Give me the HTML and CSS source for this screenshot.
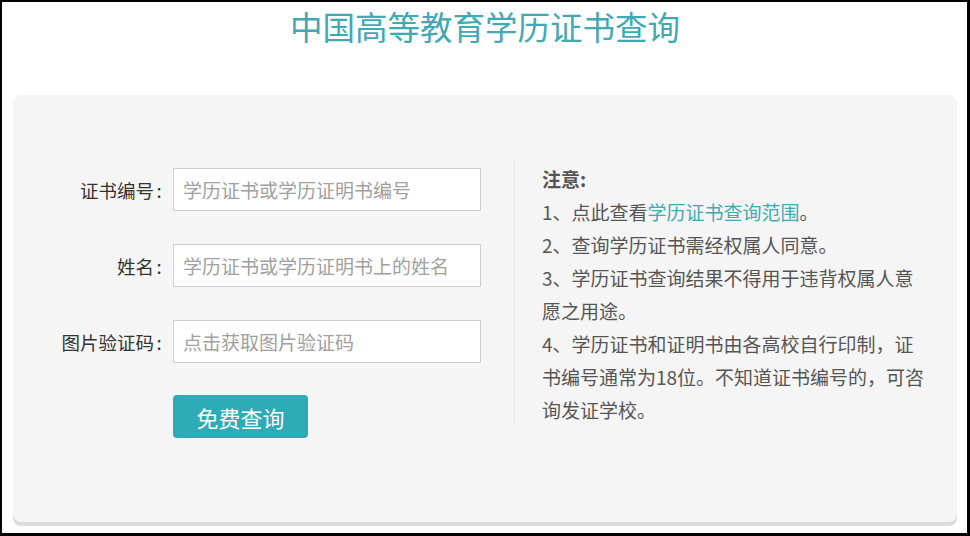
FILE: index.html
```html
<!DOCTYPE html>
<html lang="zh-CN">
<head>
<meta charset="utf-8">
<title>中国高等教育学历证书查询</title>
<link rel="stylesheet" href="styles.css">
</head>
<body>
<div class="page">
  <h1 class="title">中国高等教育学历证书查询</h1>
  <div class="card">
    <form class="form">
      <div class="row">
        <label class="label">证书编号<span class="colon">:</span></label>
        <input class="field" type="text" placeholder="学历证书或学历证明书编号">
      </div>
      <div class="row">
        <label class="label">姓名<span class="colon">:</span></label>
        <input class="field" type="text" placeholder="学历证书或学历证明书上的姓名">
      </div>
      <div class="row">
        <label class="label">图片验证码<span class="colon">:</span></label>
        <input class="field" type="text" placeholder="点击获取图片验证码">
      </div>
      <button class="btn" type="button">免费查询</button>
    </form>
    <div class="notes">
      <p class="notes-title">注意:</p>
      <p>1、点此查看<a class="link" href="#">学历证书查询范围</a>。</p>
      <p>2、查询学历证书需经权属人同意。</p>
      <p>3、学历证书查询结果不得用于违背权属人意愿之用途。</p>
      <p>4、学历证书和证明书由各高校自行印制，证书编号通常为18位。不知道证书编号的，可咨询发证学校。</p>
    </div>
  </div>
</div>
</body>
</html>
```
FILE: styles.css
```css
html, body {
  margin: 0;
  padding: 0;
  background: #000;
}
body {
  font-family: "Noto Sans CJK SC", "Noto Sans", sans-serif;
  width: 970px;
  height: 536px;
  overflow: hidden;
}
.page {
  background: #fff;
  margin: 2px 3px 0 2px;
  height: 531px;
  padding: 0 10px 0 11px;
  box-sizing: border-box;
  overflow: hidden;
}
.title {
  margin: 0;
  padding-top: 8px;
  height: 93px;
  box-sizing: border-box;
  font-size: 32.5px;
  line-height: 32px;
  font-weight: normal;
  color: #3fa9b4;
  text-align: center;
}
.card {
  background: #f5f5f5;
  border-radius: 8px;
  box-shadow: 0 4px 0 #dcdcdc;
  height: 427px;
  box-sizing: border-box;
  padding-top: 65px;
  display: flex;
  align-items: flex-start;
}
.form {
  width: 468px;
  padding: 8px 33px 0 0;
  margin: 0;
  display: flex;
  flex-direction: column;
}
.row {
  display: flex;
  align-items: center;
  height: 43px;
  margin-bottom: 33px;
}
.label {
  width: 151px;
  margin-right: 9px;
  text-align: right;
  font-size: 18.5px;
  color: #333;
}
.colon {
  display: inline-block;
  width: 10px;
  text-align: center;
}
.field {
  width: 308px;
  height: 43px;
  box-sizing: border-box;
  border: 1px solid #cfcfcf;
  background: #fff;
  padding: 0 9px;
  font-family: "Noto Sans CJK SC", "Noto Sans", sans-serif;
  font-size: 19px;
  color: #333;
  outline: none;
}
.field::placeholder {
  color: #a0a0a0;
}
.btn {
  margin: -1px 0 0 160px;
  width: 135px;
  height: 43px;
  border: none;
  border-radius: 4px;
  background: #2eabb7;
  color: #fff;
  font-family: "Noto Sans CJK SC", "Noto Sans", sans-serif;
  font-size: 22px;
  padding: 0;
  cursor: pointer;
}
.notes {
  border-left: 1px solid #e6e6e6;
  padding: 2px 0 0 27px;
  width: 386px;
  font-size: 19px;
  line-height: 33px;
  color: #555;
}
.notes p {
  margin: 0;
}
.notes-title {
  font-weight: bold;
}
.link {
  color: #3fa9b4;
  text-decoration: none;
}
```
